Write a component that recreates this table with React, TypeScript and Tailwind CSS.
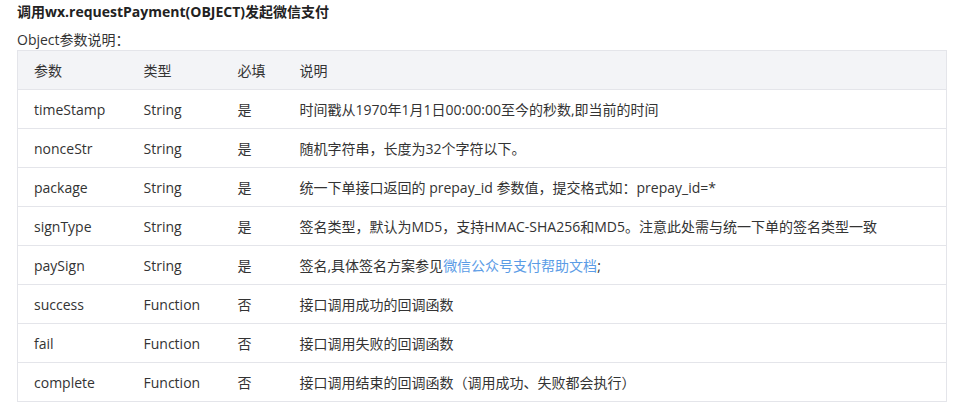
const rows: { name: string; type: string; required: string; desc: React.ReactNode }[] = [
  { name: 'timeStamp', type: 'String', required: '是', desc: '时间戳从1970年1月1日00:00:00至今的秒数,即当前的时间' },
  { name: 'nonceStr', type: 'String', required: '是', desc: '随机字符串，长度为32个字符以下。' },
  { name: 'package', type: 'String', required: '是', desc: '统一下单接口返回的 prepay_id 参数值，提交格式如：prepay_id=*' },
  { name: 'signType', type: 'String', required: '是', desc: '签名类型，默认为MD5，支持HMAC-SHA256和MD5。注意此处需与统一下单的签名类型一致' },
  {
    name: 'paySign',
    type: 'String',
    required: '是',
    desc: (
      <>
        签名,具体签名方案参见<a className="text-[#5b9ce6]">微信公众号支付帮助文档</a>;
      </>
    ),
  },
  { name: 'success', type: 'Function', required: '否', desc: '接口调用成功的回调函数' },
  { name: 'fail', type: 'Function', required: '否', desc: '接口调用失败的回调函数' },
  { name: 'complete', type: 'Function', required: '否', desc: '接口调用结束的回调函数（调用成功、失败都会执行）' },
]

export default function App() {
  return (
    <div
      className="min-h-screen bg-white px-[17px] pt-[1px] text-[14px] text-[#333]"
      style={{ fontFamily: '"Open Sans", "Noto Sans CJK SC", sans-serif' }}
    >
      <h3 className="h-[22px] text-[14px] font-bold leading-[22px] text-[#222]">调用wx.requestPayment(OBJECT)发起微信支付</h3>
      <p className="mt-[7px] h-[20px] leading-[20px]">Object参数说明：</p>
      <table className="w-[930px] border-collapse border border-[#e4e5ea] text-left">
        <thead>
          <tr className="h-[39px] bg-[#f3f4f7]">
            <th className="w-[110px] pl-4 font-normal">参数</th>
            <th className="w-[94px] pl-4 font-normal">类型</th>
            <th className="w-[62px] pl-4 font-normal">必填</th>
            <th className="pl-4 font-normal">说明</th>
          </tr>
        </thead>
        <tbody>
          {rows.map((r) => (
            <tr key={r.name} className="h-[39px] border-t border-[#e4e5ea]">
              <td className="pl-4">{r.name}</td>
              <td className="pl-4">{r.type}</td>
              <td className="pl-4">{r.required}</td>
              <td className="pl-4">{r.desc}</td>
            </tr>
          ))}
        </tbody>
      </table>
    </div>
  )
}
